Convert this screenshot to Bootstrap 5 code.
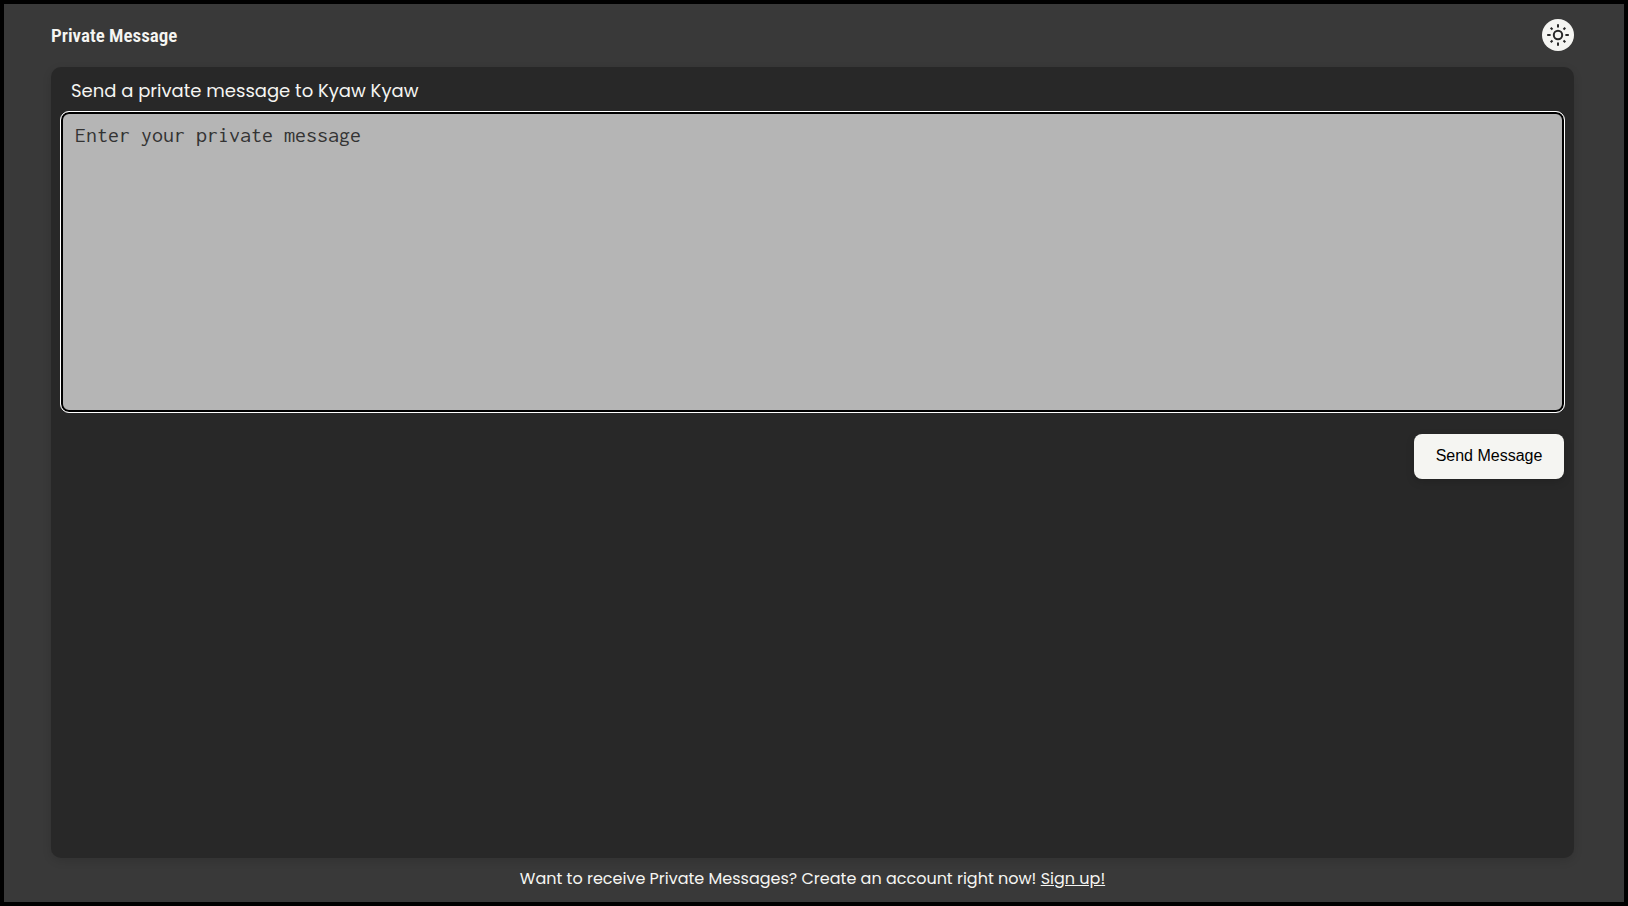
<!DOCTYPE html>
<html lang="en">
<head>
<meta charset="utf-8">
<meta name="viewport" content="width=device-width, initial-scale=1">
<title>Private Message</title>
<link href="https://cdn.jsdelivr.net/npm/bootstrap@5.3.0/dist/css/bootstrap.min.css" rel="stylesheet">
<style>
  body { background: #393939; color: #f5f5f2; border: 4px solid #000; font-family: Poppins, Inter, sans-serif; }
  .page-shell { padding: 0 50px 0 47px; }
  .page-header { height: 63px; padding-bottom: 1px; }
  .brand { font: 600 19px/24px "Roboto Condensed", "Liberation Sans Narrow", Roboto, sans-serif; padding-top: 2px; color: #f5f5f2; }
  .theme-toggle { width: 32px; height: 32px; background: #f5f5f2; color: #282828; }
  .theme-toggle:hover { background: #fff; }
  .panel { background: #282828; border-radius: 10px; padding: 10px 9px; box-shadow: 0 3px 10px rgba(0,0,0,.12); }
  .panel-label { font-size: 18px; line-height: 28px; margin: 0 11px 6px; }
  .message-box { height: 302px; background: #b5b5b5; color: #333; border: 1px solid #fff; box-shadow: inset 0 0 0 2px #000; border-radius: 9px; padding: 10px 14px; font: 22px/26px Inconsolata, Consolas, "DejaVu Sans Mono", monospace; resize: none; }
  .message-box:focus { background: #b5b5b5; border-color: #fff; box-shadow: inset 0 0 0 2px #000; }
  .message-box::placeholder { color: #333; opacity: 1; }
  .form-actions { padding: 21px 1px 0; }
  .send-btn { width: 150px; height: 45px; padding: 0 0 2px; background: #f5f5f2; color: #000; border-radius: 8px; font: 16px/20px "Liberation Sans", sans-serif; box-shadow: 0 3px 8px rgba(0,0,0,.15); }
  .send-btn:hover { background: #fff; }
  .page-footer { font-size: 16px; line-height: 24px; padding: 9px 0 11px; }
  .page-footer a { color: #f5f5f2; }
</style>
</head>
<body class="min-vh-100 d-flex flex-column">
<div class="page-shell flex-grow-1 d-flex flex-column">
  <header class="page-header d-flex align-items-center justify-content-between">
    <h1 class="brand m-0">Private Message</h1>
    <button type="button" class="theme-toggle btn rounded-circle border-0 p-0 d-flex align-items-center justify-content-center" aria-label="Toggle theme">
      <svg width="24" height="24" viewBox="0 0 24 24" fill="none" stroke="currentColor" stroke-width="2" aria-hidden="true">
        <circle cx="12" cy="12" r="4.2"/>
        <path d="M12 1.2v3.4M12 19.4v3.4M1.2 12h3.4M19.4 12h3.4M4.7 4.7l1.8 1.8M17.5 17.5l1.8 1.8M4.7 19.3l1.8-1.8M17.5 6.5l1.8-1.8"/>
      </svg>
    </button>
  </header>
  <main class="panel flex-grow-1">
    <form>
      <label for="message" class="panel-label d-block">Send a private message to Kyaw Kyaw</label>
      <textarea id="message" class="message-box form-control" placeholder="Enter your private message"></textarea>
      <div class="form-actions d-flex justify-content-end">
        <button type="button" class="send-btn btn border-0">Send Message</button>
      </div>
    </form>
  </main>
  <footer class="page-footer text-center">Want to receive Private Messages? Create an account right now! <a href="#">Sign up!</a></footer>
</div>
<script src="https://cdn.jsdelivr.net/npm/bootstrap@5.3.0/dist/js/bootstrap.bundle.min.js"></script>
</body>
</html>
